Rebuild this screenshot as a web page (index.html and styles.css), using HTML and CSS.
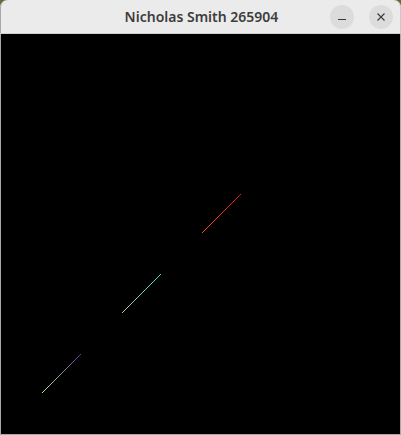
FILE: index.html
```html
<!DOCTYPE html>
<html>
<head>
<meta charset="utf-8">
<link rel="stylesheet" href="styles.css">
</head>
<body>
<div class="window">
  <div class="titlebar">
    <div class="title">Nicholas Smith 265904</div>
    <div class="buttons">
      <div class="btn"><svg width="10" height="10" viewBox="0 0 10 10"><line x1="1" y1="7.5" x2="9" y2="7.5" stroke="#3a3a3a" stroke-width="1"/></svg></div>
      <div class="btn"><svg width="10" height="10" viewBox="0 0 10 10"><path d="M1.5 1.5 L8.5 8.5 M8.5 1.5 L1.5 8.5" stroke="#3a3a3a" stroke-width="1.1" fill="none"/></svg></div>
    </div>
  </div>
  <div class="canvas">
    <svg class="drawing" width="399" height="400" viewBox="1 34 399 400">
      <defs>
        <linearGradient id="g1" gradientUnits="userSpaceOnUse" x1="201.5" y1="233.5" x2="240.5" y2="194.5">
          <stop offset="0" stop-color="#ff4a1e"/>
          <stop offset="1" stop-color="#e01c1c"/>
        </linearGradient>
        <linearGradient id="g2" gradientUnits="userSpaceOnUse" x1="121.5" y1="313.5" x2="160.5" y2="274.5">
          <stop offset="0" stop-color="#c8c094"/>
          <stop offset="1" stop-color="#3ee0d2"/>
        </linearGradient>
        <linearGradient id="g3" gradientUnits="userSpaceOnUse" x1="41.5" y1="393.5" x2="80.5" y2="354.5">
          <stop offset="0" stop-color="#a8f888"/>
          <stop offset="1" stop-color="#7030a8"/>
        </linearGradient>
      </defs>
      <line x1="201.5" y1="233.5" x2="240.5" y2="194.5" stroke="url(#g1)" stroke-width="1" shape-rendering="crispEdges"/>
      <line x1="121.5" y1="313.5" x2="160.5" y2="274.5" stroke="url(#g2)" stroke-width="1" shape-rendering="crispEdges"/>
      <line x1="41.5" y1="393.5" x2="80.5" y2="354.5" stroke="url(#g3)" stroke-width="1" shape-rendering="crispEdges"/>
    </svg>
  </div>
</div>
</body>
</html>
```
FILE: styles.css
```css
html, body {
  margin: 0;
  padding: 0;
  width: 401px;
  height: 435px;
  overflow: hidden;
  background: #5f6e38;
}
.window {
  width: 401px;
  height: 435px;
  box-sizing: border-box;
  display: flex;
  flex-direction: column;
  border-radius: 7px 7px 0 0;
  overflow: hidden;
  background: #a8a8a8;
  padding: 0 1px 1px 1px;
}
.titlebar {
  position: relative;
  height: 33px;
  flex: none;
  background: #ebebeb;
  border-bottom: 1px solid #cfcfcf;
  margin: 0 -1px;
  border-radius: 7px 7px 0 0;
  display: flex;
  align-items: center;
  justify-content: center;
  box-shadow: inset 1px 0 0 #a8a8a8, inset -1px 0 0 #c8c8c8;
}
.title {
  font-family: "Noto Sans", "Open Sans", sans-serif;
  font-weight: 600;
  font-size: 14px;
  color: #3d3d3d;
  padding-left: 2px;
}
.buttons {
  position: absolute;
  right: 8px;
  top: 5px;
  display: flex;
  gap: 15px;
}
.btn {
  width: 24px;
  height: 24px;
  border-radius: 50%;
  background: #dcdcdc;
  display: flex;
  align-items: center;
  justify-content: center;
}
.canvas {
  flex: 1;
  background: #000;
  display: flex;
}
.drawing {
  display: block;
}
```
